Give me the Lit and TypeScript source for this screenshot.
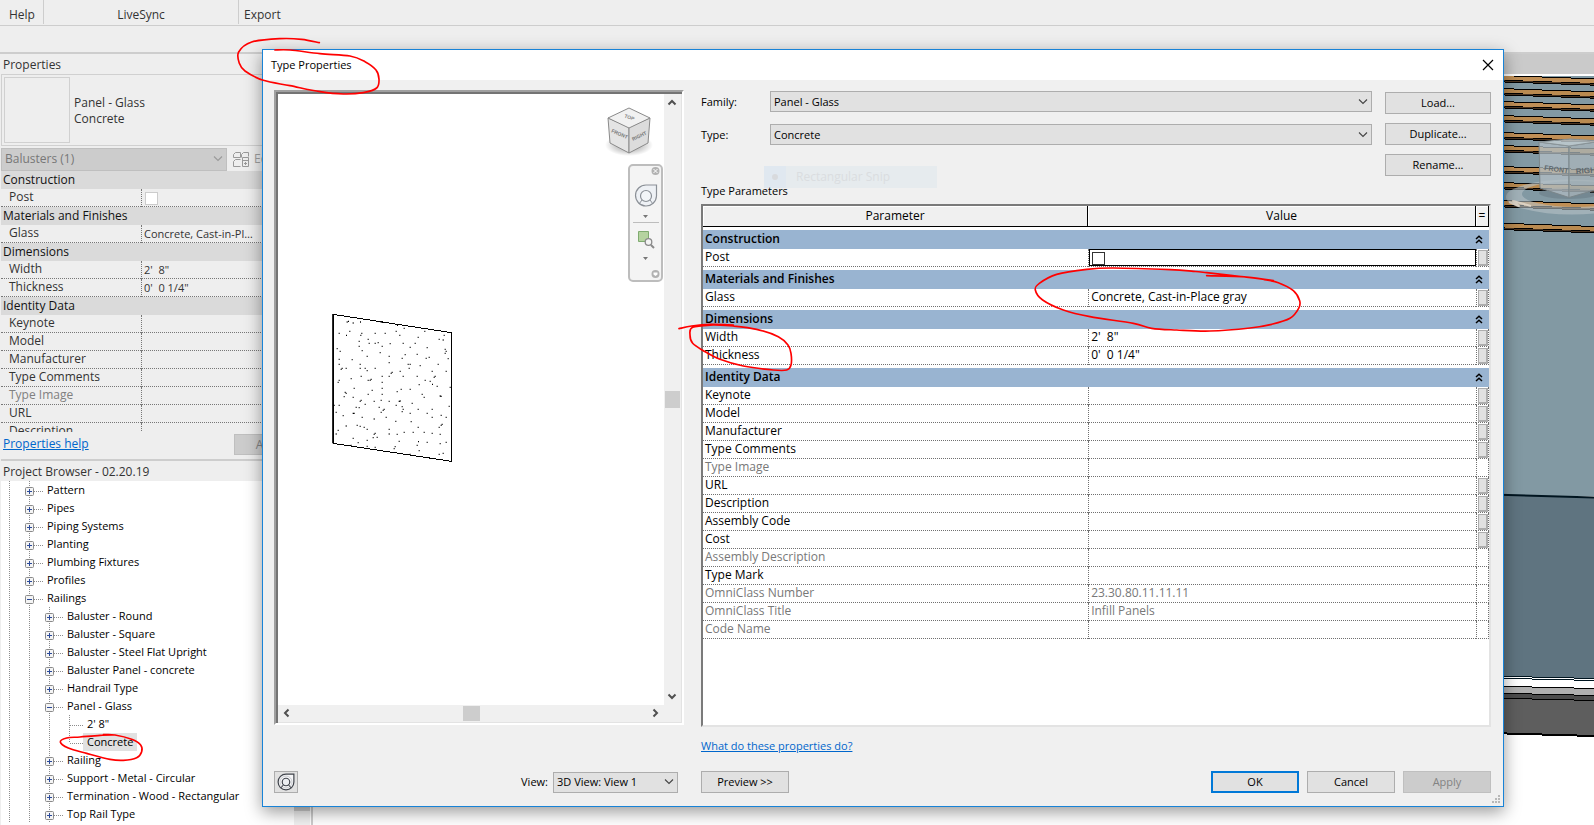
import { LitElement, html, svg, css, nothing } from "lit";
import { customElement } from "lit/decorators.js";
import { classMap } from "lit/directives/class-map.js";

type Param = { name: string; value?: string; muted?: boolean; check?: boolean; button?: boolean };
type Group = { title: string; params: Param[] };
type Node = { name: string; level: number; kind: "plus" | "minus" | "leaf"; selected?: boolean; last?: boolean };
type Pt = [number, number];

const GROUPS: Group[] = [
  { title: "Construction", params: [{ name: "Post", check: true, button: true }] },
  { title: "Materials and Finishes", params: [{ name: "Glass", value: "Concrete, Cast-in-Place gray", button: true }] },
  {
    title: "Dimensions",
    params: [
      { name: "Width", value: "2'\u00a0 8\"", button: true },
      { name: "Thickness", value: "0'\u00a0 0 1/4\"", button: true },
    ],
  },
  {
    title: "Identity Data",
    params: [
      { name: "Keynote", button: true },
      { name: "Model", button: true },
      { name: "Manufacturer", button: true },
      { name: "Type Comments", button: true },
      { name: "Type Image", muted: true },
      { name: "URL", button: true },
      { name: "Description", button: true },
      { name: "Assembly Code", button: true },
      { name: "Cost", button: true },
      { name: "Assembly Description", muted: true },
      { name: "Type Mark" },
      { name: "OmniClass Number", value: "23.30.80.11.11.11", muted: true },
      { name: "OmniClass Title", value: "Infill Panels", muted: true },
      { name: "Code Name", muted: true },
    ],
  },
];

const TREE: Node[] = [
  { name: "Pattern", level: 1, kind: "plus" },
  { name: "Pipes", level: 1, kind: "plus" },
  { name: "Piping Systems", level: 1, kind: "plus" },
  { name: "Planting", level: 1, kind: "plus" },
  { name: "Plumbing Fixtures", level: 1, kind: "plus" },
  { name: "Profiles", level: 1, kind: "plus" },
  { name: "Railings", level: 1, kind: "minus" },
  { name: "Baluster - Round", level: 2, kind: "plus" },
  { name: "Baluster - Square", level: 2, kind: "plus" },
  { name: "Baluster - Steel Flat Upright", level: 2, kind: "plus" },
  { name: "Baluster Panel - concrete", level: 2, kind: "plus" },
  { name: "Handrail Type", level: 2, kind: "plus" },
  { name: "Panel - Glass", level: 2, kind: "minus" },
  { name: "2' 8\"", level: 3, kind: "leaf" },
  { name: "Concrete", level: 3, kind: "leaf", selected: true, last: true },
  { name: "Railing", level: 2, kind: "plus" },
  { name: "Support - Metal - Circular", level: 2, kind: "plus" },
  { name: "Termination - Wood - Rectangular", level: 2, kind: "plus" },
  { name: "Top Rail Type", level: 2, kind: "plus" },
];

/* Concrete stipple of the previewed panel, in thirds of a pixel. */
const SPECKS: Pt[] = [
  [82,66],[86,64],[100,69],[122,66],[184,67],[233,76],[253,85],[315,94],[90,94],[58,100],[80,106],[126,100],[123,106],[166,100],[196,100],[229,94],[240,106],[295,112],[373,106],[358,118],[370,120],[118,124],[145,118],[148,130],[166,130],[175,128],[211,131],[250,130],[286,130],[118,139],[187,139],[52,146],[61,154],[127,152],[181,158],[271,142],[322,143],[376,148],[379,154],[376,160],[142,169],[208,169],[256,164],[247,175],[292,163],[319,175],[328,172],[385,176],[58,178],[97,179],[58,193],[121,193],[208,188],[265,193],[271,193],[355,193],[67,205],[64,208],[79,205],[121,205],[136,205],[142,212],[166,205],[268,205],[301,197],[217,217],[214,220],[241,214],[337,214],[379,214],[124,229],[187,229],[208,229],[250,229],[292,229],[346,229],[343,232],[94,236],[55,247],[58,241],[145,241],[151,241],[154,238],[187,247],[316,241],[331,244],[338,253],[298,254],[352,259],[103,265],[157,271],[187,265],[232,275],[244,268],[271,268],[391,262],[76,277],[79,280],[73,290],[100,292],[145,283],[187,283],[307,283],[313,292],[361,288],[364,289],[121,304],[124,301],[163,304],[184,301],[208,304],[238,304],[241,303],[136,313],[43,316],[58,316],[109,322],[118,323],[178,322],[193,328],[190,331],[229,316],[247,320],[277,310],[295,328],[250,328],[337,328],[388,319],[49,337],[70,347],[100,340],[103,340],[184,337],[247,335],[271,340],[322,340],[364,346],[379,352],[127,352],[163,357],[199,352],[337,352],[228,364],[274,365],[79,378],[112,376],[121,379],[133,382],[142,388],[367,373],[364,376],[358,382],[295,382],[55,391],[49,402],[166,400],[163,403],[160,413],[172,412],[208,388],[208,402],[232,403],[253,397],[280,397],[313,397],[337,400],[361,403],[100,415],[115,428],[142,421],[238,424],[296,425],[292,436],[322,427],[379,427],[361,431],[142,439],[166,442],[223,446],[226,440],[298,452],[358,463],[370,460],[271,463],[94,436],
];

/* Smooth curve through the given points. */
function curve(p: Pt[]): string {
  let d = `M${p[0][0]} ${p[0][1]}`;
  for (let i = 0; i < p.length - 1; i++) {
    const a = p[Math.max(i - 1, 0)], b = p[i], c = p[i + 1], e = p[Math.min(i + 2, p.length - 1)];
    d += `C${b[0] + (c[0] - a[0]) / 6} ${b[1] + (c[1] - a[1]) / 6} ${c[0] - (e[0] - b[0]) / 6} ${c[1] - (e[1] - b[1]) / 6} ${c[0]} ${c[1]}`;
  }
  return d;
}

const MARKS: { x: number; y: number; pts: Pt[] }[] = [
  { x: 0, y: 0, pts: [[958,128],[905,118],[840,116],[755,126],[716,156],[718,190],[735,213],[790,241],[870,257],[960,275],[1030,282],[1090,278],[1130,264],[1137,238],[1128,210],[1095,185],[1050,168],[960,161],[870,150],[825,150]] },
  { x: 690, y: 80, pts: [[1550,587],[1670,591],[1750,602],[1690,594],[1550,578],[1510,574],[1440,569],[1270,564],[1190,568],[1100,583],[1048,610],[1036,630],[1058,660],[1120,690],[1200,710],[1330,730],[1385,745],[1460,750],[1560,753],[1680,744],[1745,733],[1800,715],[1826,685],[1829,662],[1810,632],[1765,608],[1720,598]] },
  { x: 690, y: 80, pts: [[-33,746],[5,738],[60,733],[130,735],[70,735],[8,742],[0,765],[8,790],[40,812],[90,838],[160,858],[250,870],[290,870],[303,855],[303,820],[294,795],[265,770],[200,748],[130,738],[60,734]] },
  { x: 0, y: 460, pts: [[345,825],[300,826],[240,831],[200,834],[181,846],[205,864],[260,880],[330,898],[370,901],[410,893],[425,875],[422,855],[395,838],[345,825],[310,824]] },
];

/* Deck boards of the 3D view: left height of each board, in thirds of a pixel. */
const BOARDS = [104, 143, 182, 224, 275, 314, 377, 425, 479, 547];

const chevron = html`<svg class="chev" width="10" height="6" viewBox="0 0 10 6" aria-hidden="true"><path d="M1 .5 5 4.5 9 .5" fill="none" stroke="currentColor" stroke-width="1.1"/></svg>`;

const wheel = html`<svg width="18" height="18" viewBox="0 0 24 24" aria-hidden="true">
  <path d="M12 1.500H22.500V12A10.500 10.500 0 1 1 12 1.500Z" fill="#f6f6f8" stroke="#41454d" stroke-width="1.600"/>
  <circle cx="12" cy="12" r="8" fill="none" stroke="#c5c8cd" stroke-width="1.200"/>
  <circle cx="12" cy="12" r="5" fill="#eceef2" stroke="#41454d" stroke-width="1.600"/>
  <path d="m8.500 16-3.500 4M15.500 16l3.500 4" stroke="#41454d" stroke-width="1.400"/></svg>`;

@customElement("app-root")
export class AppRoot extends LitElement {
  static styles = css`
    :host {
      display: block;
      height: 100vh;
      overflow: hidden;
      position: relative;
      background: #eeeeee;
      color: #333333;
      font: 12px/16px "Open Sans", "Noto Sans", sans-serif;
    }
    * { box-sizing: border-box; }
    button, select, input { font: inherit; color: inherit; margin: 0; border-radius: 0; }
    button { padding: 0; }
    a { color: #0066cc; }
    svg { display: block; }
    table { border-collapse: separate; border-spacing: 0; table-layout: fixed; width: 100%; }
    th, td { padding: 0; text-align: left; font-weight: 400; white-space: nowrap; overflow: hidden; }

    .app { display: flex; flex-direction: column; height: 100%; }
    .tabs { display: flex; height: 26px; border-bottom: 1px solid #cdcdcd; }
    .tab { border-right: 1px solid #cdcdcd; height: 24px; padding-top: 7px; }
    .tab.first { width: 44px; padding-left: 9px; }
    .tab.sync { width: 195px; text-align: center; }
    .tab.last { border: 0; padding-left: 5px; }
    .ribbon { height: 28px; border-bottom: 2px solid #cdcdcd; }
    .work { display: flex; flex: 1; min-height: 0; }
    .dock { width: 313px; border-right: 2px solid #cdcdcd; padding-left: 1px; display: flex; flex-direction: column; }
    .head { padding: 3px 2px 0; height: 20px; }

    .typebox { height: 72px; border: 1px solid #d0d0d0; padding: 2px; display: flex; gap: 4px; align-items: center; }
    .typebox .names { padding-top: 2px; }
    .thumb { width: 66px; height: 66px; border: 1px solid #d0d0d0; }
    .filter { display: flex; align-items: center; height: 25px; padding-top: 1px; }
    .combo { display: grid; align-items: center; justify-items: end; }
    .combo > * { grid-area: 1 / 1; }
    .combo select { appearance: none; width: 100%; height: 100%; border: 1px solid #adadad; background: #e1e1e1; padding: 0 20px 0 3px; outline: 0; }
    .combo .chev { margin-right: 4px; pointer-events: none; color: #444444; }
    .filter .combo { width: 226px; height: 23px; color: #777777; }
    .filter .combo select { background: #cccccc; border-color: #bfbfbf; opacity: 1; }
    .filter .combo .chev { color: #9a9a9a; }
    .edit { display: flex; gap: 4px; margin-left: 6px; border: 0; background: none; color: #a0a0a0; align-items: center; }

    .scroll { height: 261px; overflow: hidden; }
    .props .grp th { height: 18px; background: #dadada; color: #111111; padding-left: 2px; }
    .props .row > * { height: 18px; line-height: 15px; vertical-align: top; border-bottom: 1px dotted #777777; }
    .props .row th { padding-left: 8px; }
    .props .row td { border-left: 1px dotted #777777; padding-left: 2px; font-size: 11px; }
    .props .muted { color: #808080; }
    .props .c1 { width: 140px; }
    .clip { width: 113px; padding-top: 1px; overflow: hidden; text-overflow: ellipsis; }
    .box { appearance: none; display: block; width: 13px; height: 13px; border: 1px solid #333333; background: #ffffff; }
    .props .box { border-color: #cccccc; margin: 3px 0 0 1px; }

    .foot { display: flex; justify-content: space-between; height: 27px; padding: 2px 2px 4px; }
    .foot a { padding-top: 2px; }
    .foot button { width: 75px; height: 21px; border: 1px solid #bfbfbf; background: #cccccc; color: #838383; }
    .browser { border-top: 2px solid #cdcdcd; flex: 1; display: flex; flex-direction: column; min-height: 0; }
    .treewrap { display: flex; flex: 1; min-height: 0; overflow: hidden; background: #ffffff; }
    .tree { flex: 1; list-style: none; margin: 0; padding: 0 0 0 8px; color: #000000; font-size: 11px; }
    .tree li { display: flex; height: 18px; line-height: 17px; white-space: nowrap; }
    .tree .label { padding: 0 2px; }
    .tree .selected { background: #e1e1e1; margin-left: -2px; padding: 0 4px; }
    .vbar { width: 16px; background: #f0f0f0; margin-right: 1px; }
    .vbar .thumbbar { height: 330px; background: #cdcdcd; }

    .canvas { flex: 1; min-width: 0; background: #ffffff; display: flex; justify-content: flex-end; }
    .scene { flex: none; }
    .scene text, .cube text { font-family: "Liberation Sans", sans-serif; font-weight: 700; }

    .dialog {
      position: absolute; inset: 49px 90px 18px 262px;
      display: flex; flex-direction: column;
      border: 1px solid #1883d7; background: #f0f0f0; color: #000000;
      box-shadow: 0 5px 16px rgba(0, 0, 0, 0.4);
    }
    .title { display: flex; justify-content: space-between; align-items: center; height: 30px; padding: 0 9px 0 8px; background: #ffffff; }
    .title h1 { margin: 0; font: inherit; font-size: 11px; }
    .close { border: 0; background: none; }
    .body { flex: 1; min-height: 0; display: grid; grid-template-columns: 410fr 790fr; gap: 17px; padding: 10px 12px 13px 11px; font-size: 11px; }
    .left, .right { display: flex; flex-direction: column; min-width: 0; min-height: 0; }

    .view { flex: 1; min-height: 0; margin-bottom: 46px; display: grid; grid-template: minmax(0, 1fr) 16px / 1fr 16px; border: 2px solid; border-color: #a0a0a0 #ffffff #ffffff #a0a0a0; padding: 2px; background: #f0f0f0; box-shadow: inset 2px 2px #747474, inset -1px -1px #e3e3e3; }
    .stage { background: #ffffff; display: flex; justify-content: space-between; overflow: hidden; }
    .solid { margin: 206px 0 0 42px; }
    .tools { display: flex; flex-direction: column; align-items: flex-end; padding: 11px 1px 0 0; gap: 7px; }
    .cube { margin-right: 9px; }
    .nav { width: 35px; height: 118px; border: 2px solid #bdbdbd; border-radius: 5px; background: #f4f4f4; }
    .sb { display: flex; justify-content: space-between; align-items: center; color: #505050; }
    .sb.v { flex-direction: column; padding: 5px 0; }
    .sb.h { padding: 0 5px; }
    .grip { background: #cdcdcd; }
    .v .grip { width: 15px; height: 17px; }
    .h .grip { width: 17px; height: 15px; }
    .bar { display: flex; align-items: center; height: 22px; }
    .bar label { margin-left: auto; margin-right: 5px; }
    .bar .combo { width: 125px; height: 21px; margin-right: 6px; }
    .btn { height: 22px; border: 1px solid #adadad; background: #e1e1e1; text-align: center; }
    .btn.icon { width: 24px; display: grid; place-items: center; }
    .btn.wide { width: 88px; }
    .btn.default { border: 2px solid #0078d7; }
    .btn:disabled { background: #cccccc; border-color: #bfbfbf; color: #838383; }

    .form { display: flex; gap: 13px; }
    .fields { flex: 1; display: flex; flex-direction: column; gap: 12px; padding-top: 1px; }
    .field { display: flex; align-items: center; height: 21px; }
    .field label { width: 69px; }
    .field .combo { flex: 1; height: 21px; }
    .stack { width: 106px; display: flex; flex-direction: column; gap: 9px; padding-top: 2px; }
    .ghost { position: absolute; left: 501px; top: 116px; width: 173px; height: 22px; display: flex; align-items: center; gap: 10px; background: #e6ebee; color: #dadde0; font-size: 12px; }
    .ghost i { width: 22px; height: 22px; background: #e0e8f0; display: grid; place-items: center; }
    .caption { position: relative; margin: 7px 0 5px; }
    .params { flex: 1; min-height: 0; border: 2px solid; border-color: #7a7a7a #e3e3e3 #e3e3e3 #7a7a7a; background: #ffffff; overflow: hidden; font-size: 12px; }
    .params .c1 { width: 49%; }
    .params .c3 { width: 13px; }
    .params thead th { height: 21px; text-align: center; background: #f0f0f0; border-bottom: 1px solid #000000; border-right: 1px solid #000000; box-shadow: inset 1px 1px #ffffff; }
    .params .grp th { height: 22px; vertical-align: top; border-top: 3px solid #ffffff; background: #99b4d1; background-clip: padding-box; font-weight: 600; padding-left: 2px; }
    .grpline { display: flex; justify-content: space-between; align-items: center; height: 18px; padding-right: 6px; }
    .params .row > * { height: 18px; line-height: 15px; vertical-align: top; border-bottom: 1px dotted #707070; }
    .params .row th { padding-left: 2px; }
    .params .row td { border-left: 1px dotted #707070; padding-left: 2px; }
    .params .row td:last-child { border-right: 1px dotted #707070; padding: 1px 0 0 1px; }
    .params .row td.active { padding: 0; }
    .active div { height: 17px; border: 1px solid #000000; padding: 2px 2px 0; }
    .assoc { display: block; width: 10px; height: 16px; border: 1px solid #adadad; border-width: 1px 2px 2px 1px; background: #e1e1e1; }
    .muted { color: #787878; }
    .about { align-self: flex-start; margin: 11px 0 17px; }
    .bar .gap { flex: 1; }
    .bar.actions { gap: 8px; }
    .size { position: absolute; right: 2px; bottom: 2px; }
    .ink { position: absolute; left: 0; top: 0; pointer-events: none; overflow: visible; }
  `;

  private treeRow(n: Node) {
    const x = n.level * 20 + 1;
    const lines = Array.from({ length: n.level }, (_, i) => svg`<path d=${`M${i * 20 + 0.5} 0V18`}/>`);
    return html`<li>
      <svg width=${n.level * 20 + 16} height="18" aria-hidden="true">
        <g stroke="#8c8c8c" stroke-dasharray="1 1" fill="none">
          ${lines}
          <path d=${`M${x - 0.5} 0V${n.last ? 10 : 18}`}/>
          <path d=${`M${x} 10.5H${x + 14}`}/>
        </g>
        ${n.kind === "leaf" ? nothing : svg`
          <rect x=${x - 4.5} y="6.5" width="8" height="8" rx="1" fill="#f4f4f4" stroke="#8a8a8a"/>
          <path d=${`M${x - 3} 10.5h5${n.kind === "plus" ? `M${x - 0.5} 8v5` : ""}`} stroke="#2b4a9a"/>`}
      </svg>
      <span class=${classMap({ label: true, selected: !!n.selected })}>${n.name}</span>
    </li>`;
  }

  private scene() {
    return html`<svg class="scene" width="104" height="771" viewBox="0 14 104 771" aria-hidden="true">
      <rect y="14" width="104" height="21" fill="#cacaca"/>
      <rect y="36" width="104" height="420" fill="#8299a3"/>
      <path d="M0 455 104 457.5V639L0 636Z" fill="#5f7480"/>
      <path d="M0 454.5 104 457.5" stroke="#001520" stroke-width="2"/>
      <g shape-rendering="crispEdges" transform="scale(.3333)">
        ${BOARDS.map((y, i) => svg`<g transform=${`translate(0 ${y})`}>
          <path d="M0 0 312 11V33L0 22Z" fill="#000"/>
          <path d="M0 3 312 14V25L0 14Z" fill=${i % 2 ? "#b98a50" : "#c08f56"}/>
          <path d="M0 16 312 27V30L0 19Z" fill="#4a3420"/>
        </g>`)}
        <rect y="102" width="312" height="6" fill="#fff"/>
      </g>
      <path fill-rule="evenodd" fill="#b5c1c6" fill-opacity=".6" d="M16 157A66 17.500 0 0 1 148 157A66 17.500 0 0 1 16 157ZM32 154A54 13 0 0 0 140 154A54 13 0 0 0 32 154Z"/>
      <ellipse cx="79" cy="153" rx="30" ry="6" fill="#5b6b74" fill-opacity=".35"/>
      <g stroke-linejoin="round">
        <path d="M49 102 79 106V157.500L50 148Z" fill="#b3bfc5" fill-opacity=".75" stroke="#7b868a"/>
        <path d="M79 106 112 101V148L79 157.500Z" fill="#a9b5bb" fill-opacity=".75" stroke="#7b868a"/>
        <path d="M49 102 80 99 112 101 79 106Z" fill="#c4ced2" fill-opacity=".8" stroke="#8a9498"/>
        <text x="54" y="130" transform="rotate(8 54 130)" font-size="7" fill="#5f696e">FRONT</text>
        <text x="86" y="134" transform="rotate(-4 86 134)" font-size="8" fill="#5f696e">RIGHT</text>
        <path d="m19 162 10 4-6-5 18 5" stroke="#dcd2c4" stroke-width="2" fill="none"/>
      </g>
      <g shape-rendering="crispEdges">
        <path d="M0 636 104 639V648H0Z" fill="#fff"/>
        <path d="M0 636 104 638.500" stroke="#001520"/>
        <path d="M0 638 104 640.500" stroke="#001520"/>
        <path d="M0 646 104 648.500V656L0 654Z" fill="#b0b0b0"/>
        <path d="M0 646 104 648.500" stroke="#000"/>
        <path d="M0 653 104 655V660L0 658Z" fill="#4c4c4c"/>
        <path d="M0 653 104 655.500" stroke="#000"/>
        <path d="M0 658 104 660.500V696L0 693Z" fill="#5e5e5e"/>
        <path d="M0 658 104 660.500" stroke="#000"/>
        <path d="M0 693 104 696" stroke="#000" stroke-width="2"/>
      </g>
    </svg>`;
  }

  private preview() {
    return html`<div class="view">
      <div class="stage">
        <svg class="solid" width="150" height="175" viewBox="0 0 450 525" role="img" aria-label="Concrete panel">
          <path d="M39 43 394 98V484L39 430Z" fill="#fff" stroke="#000" stroke-width="3" shape-rendering="crispEdges"/>
          <path d="M39 42V430" stroke="#000" stroke-width="5"/>
          <path d=${SPECKS.map(([x, y]) => `M${x - 2} ${y - 2}h3v4h-3z`).join("")} fill="#000"/>
        </svg>
        <div class="tools">
          <svg class="cube" width="50" height="52" viewBox="0 0 50 52" aria-hidden="true">
            <defs><radialGradient id="sh"><stop offset="0" stop-color="#000" stop-opacity=".45"/><stop offset="1" stop-color="#000" stop-opacity="0"/></radialGradient></defs>
            <ellipse cx="25" cy="40" rx="24" ry="11" fill="url(#sh)"/>
            <path d="M4 13 25 22V48L6 38Z" fill="#e4e4e4" stroke="#8a8a8a"/>
            <path d="M46 13 25 22V48L44 38Z" fill="#dcdcdc" stroke="#8a8a8a"/>
            <path d="M25 3 46 13 25 23 4 13Z" fill="#f1f1f1" stroke="#8a8a8a"/>
            <text x="7" y="27" font-size="5" fill="#777" transform="rotate(24 7 27)">FRONT</text>
            <text x="29" y="36" font-size="5" fill="#777" transform="rotate(-26 29 36)">RIGHT</text>
            <text x="20" y="14" font-size="5" fill="#888" transform="rotate(20 25 13)">TOP</text>
          </svg>
          <svg class="nav" width="35" height="118" viewBox="0 0 31 114" aria-hidden="true">
            <circle cx="25.500" cy="5" r="4" fill="#b2b2b2"/><path d="m23.500 3 4 4m0-4-4 4" stroke="#fff"/>
            <path d="M16 19H26.500V30A10.500 10.500 0 1 1 16 19Z" fill="#eef1f5" stroke="#8b9097" stroke-width="1.200"/>
            <circle cx="16" cy="30" r="5.500" fill="#f2f5f8" stroke="#8b9097" stroke-width="1.200"/>
            <path d="m12 34-3 4m11-4 3 4" stroke="#8b9097"/>
            <path d="M13 49h5l-2.500 3zM13 91h5l-2.500 3z" fill="#777"/>
            <path d="M3 56.500H29" stroke="#bdbdbd"/>
            <path d="M8.500 65.500h10v10h-10z" fill="#b5d3a0" stroke="#7fab70"/>
            <circle cx="18.500" cy="76" r="3.300" fill="#f4f4f4" stroke="#8a8a8a" stroke-width="1.300"/><path d="m21 79 3 3" stroke="#8a8a8a" stroke-width="2"/>
            <circle cx="25.500" cy="108" r="4" fill="#b2b2b2"/><path d="M23.500 106.500h4v2l-2 1.500-2-1.500z" fill="#fff"/>
          </svg>
        </div>
      </div>
      <div class="sb v">
        <svg width="10" height="7" viewBox="0 0 10 7"><path d="M1.500 5.500 5 2 8.500 5.500" fill="none" stroke="currentColor" stroke-width="2"/></svg>
        <span class="grip"></span>
        <svg width="10" height="7" viewBox="0 0 10 7"><path d="M1.500 1.500 5 5 8.500 1.500" fill="none" stroke="currentColor" stroke-width="2"/></svg>
      </div>
      <div class="sb h">
        <svg width="7" height="10" viewBox="0 0 7 10"><path d="M5.500 1.500 2 5 5.500 8.500" fill="none" stroke="currentColor" stroke-width="2"/></svg>
        <span class="grip"></span>
        <svg width="7" height="10" viewBox="0 0 7 10"><path d="M1.500 1.500 5 5 1.500 8.500" fill="none" stroke="currentColor" stroke-width="2"/></svg>
      </div>
    </div>`;
  }

  private dockRow(p: Param) {
    return html`<tr class=${classMap({ row: true, muted: !!p.muted })}>
      <th scope="row">${p.name}</th>
      <td>${p.check ? html`<input class="box" type="checkbox" aria-label=${p.name} disabled>` : html`<div class="clip">${p.value ?? ""}</div>`}</td>
    </tr>`;
  }

  private paramRow(p: Param) {
    return html`<tr class=${classMap({ row: true, muted: !!p.muted })}>
      <th scope="row">${p.name}</th>
      ${p.check
        ? html`<td class="active"><div><input class="box" type="checkbox" aria-label=${p.name}></div></td>`
        : html`<td>${p.value ?? ""}</td>`}
      <td>${p.button ? html`<button class="assoc" aria-label="Associate ${p.name}"></button>` : nothing}</td>
    </tr>`;
  }

  render() {
    return html`
      <div class="app">
        <nav class="tabs">
          <span class="tab first">Help</span><span class="tab sync">LiveSync</span><span class="tab last">Export</span>
        </nav>
        <div class="ribbon"></div>
        <div class="work">
          <aside class="dock">
            <div class="head">Properties</div>
            <div class="typebox"><div class="thumb"></div><div class="names">Panel - Glass<br>Concrete</div></div>
            <div class="filter">
              <div class="combo"><select aria-label="Category filter" disabled><option>Balusters (1)</option></select>${chevron}</div>
              <button class="edit" disabled>
                <svg width="17" height="17" viewBox="0 0 17 17" fill="none" stroke="#999"><path d="M2.500 1.500h5v5h-7v-3zM10.500 1.500h5v4M10.500 1.500l-2 2v3M2.500 8.500h5M2.500 8.500l-2 2v5h7M9.500 6.500h6v9h-6zM9.500 9.500h6M11 12.500h3M12.500 11v3"/></svg>
                Edit Type
              </button>
            </div>
            <div class="scroll">
              <table class="props">
                <colgroup><col class="c1"><col></colgroup>
                ${GROUPS.map((g) => html`<tbody>
                  <tr class="grp"><th colspan="2">${g.title}</th></tr>
                  ${g.params.slice(0, 7).map((p) => this.dockRow(p))}
                </tbody>`)}
              </table>
            </div>
            <div class="foot"><a href="#help">Properties help</a><button disabled>Apply</button></div>
            <section class="browser">
              <div class="head">Project Browser - 02.20.19</div>
              <div class="treewrap">
                <ul class="tree">${TREE.map((n) => this.treeRow(n))}</ul>
                <div class="vbar"><div class="thumbbar"></div></div>
              </div>
            </section>
          </aside>
          <main class="canvas">${this.scene()}</main>
        </div>
      </div>

      <section class="dialog" role="dialog" aria-labelledby="dlg">
        <header class="title">
          <h1 id="dlg">Type Properties</h1>
          <button class="close" aria-label="Close"><svg width="12" height="12" viewBox="0 0 12 12"><path d="m1 1 10 10M11 1 1 11" stroke="#000" stroke-width="1.200"/></svg></button>
        </header>
        <div class="body">
          <div class="left">
            ${this.preview()}
            <div class="bar">
              <button class="btn icon" aria-label="Steering wheel">${wheel}</button>
              <label for="view">View:</label>
              <div class="combo"><select id="view"><option>3D View: View 1</option></select>${chevron}</div>
            </div>
          </div>
          <div class="right">
            <div class="form">
              <div class="fields">
                <div class="field"><label for="fam">Family:</label><div class="combo"><select id="fam"><option>Panel - Glass</option></select>${chevron}</div></div>
                <div class="field"><label for="typ">Type:</label><div class="combo"><select id="typ"><option>Concrete</option></select>${chevron}</div></div>
              </div>
              <div class="stack"><button class="btn">Load...</button><button class="btn">Duplicate...</button><button class="btn">Rename...</button></div>
            </div>
            <div class="ghost"><i><svg width="8" height="8" viewBox="0 0 8 8"><circle cx="4" cy="4" r="3" fill="#d8dadd"/></svg></i>Rectangular Snip</div>
            <div class="caption">Type Parameters</div>
            <div class="params">
              <table>
                <colgroup><col class="c1"><col><col class="c3"></colgroup>
                <thead><tr><th scope="col">Parameter</th><th scope="col">Value</th><th scope="col">=</th></tr></thead>
                ${GROUPS.map((g) => html`<tbody>
                  <tr class="grp"><th colspan="3"><div class="grpline">${g.title}
                    <svg width="8" height="9" viewBox="0 0 8 9" aria-hidden="true"><path d="M1 4 4 1.200 7 4M1 8 4 5.200 7 8" fill="none" stroke="#000" stroke-width="1.500"/></svg></div></th></tr>
                  ${g.params.map((p) => this.paramRow(p))}
                </tbody>`)}
              </table>
            </div>
            <a class="about" href="#props">What do these properties do?</a>
            <div class="bar actions">
              <button class="btn wide">Preview &gt;&gt;</button><span class="gap"></span>
              <button class="btn wide default">OK</button><button class="btn wide">Cancel</button><button class="btn wide" disabled>Apply</button>
            </div>
          </div>
        </div>
        <svg class="size" width="9" height="9" viewBox="0 0 9 9" fill="#b8b8b8" aria-hidden="true"><path d="M6 0h2v2H6zM3 3h2v2H3zM6 3h2v2H6zM0 6h2v2H0zM3 6h2v2H3zM6 6h2v2H6z"/></svg>
      </section>

      <svg class="ink" width="10" height="10" aria-hidden="true" fill="none" stroke="#ff0000" stroke-width="5" stroke-linecap="round">
        ${MARKS.map((m) => svg`<path transform=${`translate(${m.x} ${m.y}) scale(.33333)`} d=${curve(m.pts)}/>`)}
      </svg>
    `;
  }
}
